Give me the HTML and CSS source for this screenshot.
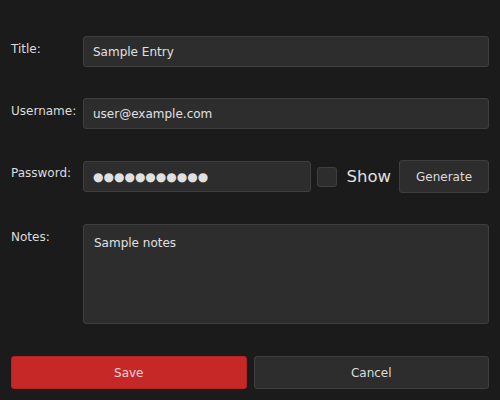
FILE: index.html
```html
<!DOCTYPE html>
<html>
<head>
<meta charset="utf-8">
<link rel="stylesheet" href="styles.css">
</head>
<body>
<form class="form">
  <label class="label">Title:</label>
  <input class="field" type="text" value="Sample Entry">

  <label class="label">Username:</label>
  <input class="field" type="text" value="user@example.com">

  <label class="label">Password:</label>
  <div class="pw-row">
    <input class="field pw" type="text" value="●●●●●●●●●●●">
    <span class="check"></span>
    <span class="show">Show</span>
    <button type="button" class="btn gen">Generate</button>
  </div>

  <label class="label">Notes:</label>
  <textarea class="field notes">Sample notes</textarea>
</form>
<div class="actions">
  <button type="button" class="btn save">Save</button>
  <button type="button" class="btn cancel">Cancel</button>
</div>
</body>
</html>
```
FILE: styles.css
```css
html, body {
  margin: 0;
  background: #1b1b1b;
}
body {
  padding: 36px 11px 0 11px;
  font-family: "DejaVu Sans", sans-serif;
  font-size: 12px;
  color: #dcdcdc;
}
.form {
  display: grid;
  grid-template-columns: 72px 1fr;
  row-gap: 31px;
  margin: 0;
}
.label {
  padding-top: 6px;
  color: #dcdcdc;
  line-height: 14px;
}
.field {
  box-sizing: border-box;
  height: 31px;
  width: 100%;
  margin: 0;
  padding: 0 9px;
  background: #2d2d2d;
  border: 1px solid #3f3f3f;
  border-radius: 3px;
  color: #e0e0e0;
  font-family: "DejaVu Sans", sans-serif;
  font-size: 12px;
  outline: none;
}
.pw-row {
  display: flex;
  align-items: center;
  height: 33px;
}
.pw {
  flex: 1;
  width: auto;
  min-width: 0;
}
.check {
  box-sizing: border-box;
  width: 20px;
  height: 20px;
  margin-left: 6px;
  background: #2d2d2d;
  border: 1px solid #3f3f3f;
  border-radius: 3px;
}
.show {
  margin-left: 9px;
  font-size: 16.5px;
  color: #e0e0e0;
}
.btn {
  box-sizing: border-box;
  height: 33px;
  margin: 0;
  background: #2d2d2d;
  border: 1px solid #3f3f3f;
  border-radius: 3px;
  color: #dcdcdc;
  font-family: "DejaVu Sans", sans-serif;
  font-size: 12px;
  padding: 0;
}
.gen {
  width: 90px;
  margin-left: 8px;
}
.notes {
  height: 100px;
  padding: 11px 10px;
  resize: none;
  line-height: 14px;
}
.actions {
  display: flex;
  gap: 7px;
  margin-top: 32px;
}
.actions .btn {
  flex: 1;
}
.save {
  background: #c62828;
  border-color: #b52222;
  color: #f0d8d8;
}
.cancel {
  background: #2d2d2d;
}
```
